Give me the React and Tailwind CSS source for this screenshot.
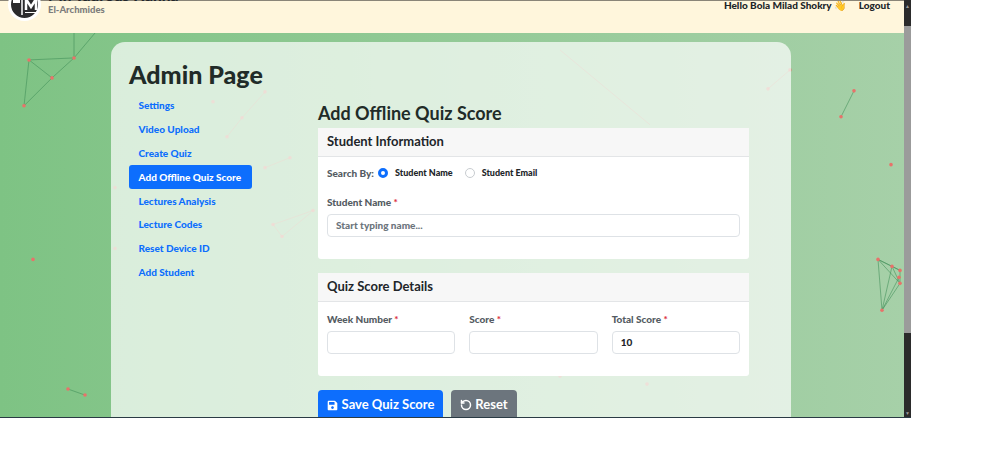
import { RotateCcw } from 'lucide-react';
import { FaSave } from 'react-icons/fa';

const navItems = [
  { name: 'Settings' },
  { name: 'Video Upload' },
  { name: 'Create Quiz' },
  { name: 'Add Offline Quiz Score', active: true },
  { name: 'Lectures Analysis' },
  { name: 'Lecture Codes' },
  { name: 'Reset Device ID' },
  { name: 'Add Student' },
];

// network backdrop, in page coordinates
const dots = [
  [29, 60], [74, 58], [52, 78], [24, 106], [854, 91], [841, 117], [891, 165],
  [878, 260], [892, 267], [900, 271], [899, 278], [900, 284], [882, 311],
  [68, 390], [85, 396], [33, 260],
];

const lines = [
  [29, 60, 74, 58], [29, 60, 52, 78], [29, 60, 24, 106], [24, 106, 52, 78], [52, 78, 74, 58],
  [74, 58, 95, 33], [74, 58, 74, 33], [854, 91, 841, 117], [68, 390, 85, 396],
  [878, 260, 892, 267], [892, 267, 900, 271], [878, 260, 900, 284], [878, 260, 882, 311],
  [882, 311, 900, 284], [882, 311, 899, 278], [892, 267, 900, 284], [900, 271, 900, 284],
  [882, 311, 892, 267], [878, 260, 900, 271],
];

const faintDots = [
  [213, 102], [265, 92], [242, 118], [227, 137], [290, 158], [265, 168], [273, 225], [282, 237],
  [313, 211], [115, 188], [115, 249], [790, 70], [768, 89], [647, 385], [560, 377],
];

const faint = [
  [265, 92, 242, 118], [242, 118, 227, 137], [290, 158, 265, 168], [273, 225, 313, 211],
  [282, 237, 311, 213], [273, 225, 282, 237], [790, 70, 768, 89], [560, 50, 650, 125],
];

const Backdrop = () => (
  <svg className="absolute inset-0 h-full w-full" viewBox="0 0 904 385" preserveAspectRatio="none">
    <g transform="translate(0 -33)">
      {lines.map(([x1, y1, x2, y2], i) => (
        <line key={i} x1={x1} y1={y1} x2={x2} y2={y2} stroke="#3f8f58" strokeWidth="0.7" opacity="0.8" />
      ))}
      {faint.map(([x1, y1, x2, y2], i) => (
        <line key={i} x1={x1} y1={y1} x2={x2} y2={y2} stroke="#e0695f" strokeWidth="0.7" opacity="0.5" />
      ))}
      {faintDots.map(([cx, cy], i) => (
        <circle key={i} cx={cx} cy={cy} r="1.8" fill="#e8726a" opacity="0.6" />
      ))}
      {dots.map(([cx, cy], i) => (
        <circle key={i} cx={cx} cy={cy} r="1.8" fill="#e8726a" />
      ))}
    </g>
  </svg>
);

const Label = ({ children }) => (
  <div className="text-[10px] leading-[14px] font-black text-[#545b62]">
    {children} <span className="text-[#dc3545]">*</span>
  </div>
);

const Field = ({ label, value }) => (
  <div className="flex flex-col gap-[5px]">
    <Label>{label}</Label>
    <div className="flex h-[23px] items-center rounded-[4px] border border-[#dee2e6] bg-white px-2 text-[10px] font-black text-[#212529]">
      {value}
    </div>
  </div>
);

const Card = ({ title, children }) => (
  <div className="rounded-[3px] bg-white">
    <div className="flex h-[29px] items-center border-b border-[#e3e5e7] bg-[#f7f7f7] px-[9px] text-[13px] font-bold text-[#212529]">
      {title}
    </div>
    {children}
  </div>
);

export default function App() {
  return (
    <div className="h-[461px] w-[1000px] overflow-hidden bg-white font-['Lato','Noto_Sans',sans-serif]">
      <div className="flex h-[418px] w-[911px] border-b border-[#2a3a44]">
        <div className="flex w-[904px] flex-col overflow-hidden">
          <header className="flex h-[33px] shrink-0 items-start justify-between border-t border-[#8a8578] bg-[#fff6dc] pr-[14px] pl-[9px]">
            <div className="-mt-[12px] flex items-start gap-[8px]">
              <div className="h-[31px] w-[31px] shrink-0 rounded-full border-[2px] border-white bg-[#2b2b2d] shadow-[0_0_0_1px_#fff]">
                <svg width="27" height="27" viewBox="0 0 27 27">
                  <path d="M2 10.5h7" fill="none" stroke="#fff" strokeWidth="3" />
                  <path d="M11 0v24" fill="none" stroke="#fff" strokeWidth="1.5" />
                  <path d="M15 19V8l5 8 5-8v11" fill="none" stroke="#fff" strokeWidth="2.5" />
                  <path d="M14 21.5h11" fill="none" stroke="#fff" strokeWidth="1" />
                </svg>
              </div>
              <div className="-mt-[1px] flex flex-col">
                <span className="text-[15.5px] leading-[15px] font-black whitespace-nowrap text-[#212529]">Mr. Tadrous Hanna</span>
                <span className="mt-[2px] text-[9.5px] leading-[10px] font-black text-[#7d7d7d]">El-Archmides</span>
              </div>
            </div>
            <div className="-mt-[1px] flex items-center gap-[13px] text-[10px] leading-[11px] font-black text-[#212529]">
              <span>Hello Bola Milad Shokry <span className="text-[10px]">👋</span></span>
              <span>Logout</span>
            </div>
          </header>

          <main className="relative flex-1 overflow-hidden bg-gradient-to-r from-[#7ec384] to-[#a6d0a8] px-[111px] pt-[9px]">
            <Backdrop />
            <div className="relative h-[400px] w-[680px] rounded-t-[14px] bg-white/70 pt-[16px] pr-[42px] pl-[18px]">
              <h1 className="text-[25px] leading-[32px] font-black text-[#212b28]">Admin Page</h1>
              <div className="mt-[4px] flex">
                <nav className="flex w-[189px] shrink-0 flex-col">
                  {navItems.map((nav) => (
                    <div
                      key={nav.name}
                      className={`flex h-[23.8px] w-[123px] items-center rounded-[3px] px-[9.5px] text-[10px] font-black whitespace-nowrap ${
                        nav.active ? 'bg-[#0d6efd] text-white' : 'text-[#0d6efd]'
                      }`}
                    >
                      {nav.name}
                    </div>
                  ))}
                </nav>
                <div className="flex-1">
                  <h2 className="mt-[8px] mb-[4px] text-[18px] leading-[22px] font-bold text-[#212b28]">Add Offline Quiz Score</h2>
                  <Card title="Student Information">
                    <div className="px-[9px] pt-[9px] pb-[22px]">
                      <div className="flex h-[14px] items-center text-[9px] font-black text-[#212529]">
                        <span className="mr-[4px] text-[10px] text-[#545b62]">Search By:</span>
                        <span className="mr-[7px] h-[10px] w-[10px] rounded-full border-[3px] border-[#0d6efd] bg-white" />
                        <span className="mr-[12px]">Student Name</span>
                        <span className="mr-[7px] h-[10px] w-[10px] rounded-full border border-[#c8ccd0] bg-white" />
                        <span>Student Email</span>
                      </div>
                      <div className="mt-[15px] flex flex-col gap-[5px]">
                        <Label>Student Name</Label>
                        <div className="flex h-[23px] items-center rounded-[4px] border border-[#dee2e6] bg-white px-2 text-[10px] font-black text-[#6c757d]">
                          Start typing name...
                        </div>
                      </div>
                    </div>
                  </Card>
                  <div className="mt-[14px]">
                    <Card title="Quiz Score Details">
                      <div className="grid grid-cols-3 gap-[14px] px-[9px] pt-[10px] pb-[22px]">
                        <Field label="Week Number" />
                        <Field label="Score" />
                        <Field label="Total Score" value="10" />
                      </div>
                    </Card>
                  </div>
                  <div className="mt-[14px] flex gap-[8px]">
                    <div className="flex h-[30px] w-[125px] items-center justify-center gap-[4px] rounded-[4px] bg-[#0d6efd] text-[13px] font-bold text-white">
                      <FaSave size={11} />
                      Save Quiz Score
                    </div>
                    <div className="flex h-[30px] w-[66px] items-center justify-center gap-[3px] rounded-[4px] bg-[#6c757d] text-[13px] font-bold text-white">
                      <RotateCcw size={12} strokeWidth={3} />
                      Reset
                    </div>
                  </div>
                </div>
              </div>
            </div>
          </main>
        </div>

        <div className="flex w-[7px] flex-col bg-[#2b2b2b]">
          <div className="h-[26px] pt-[3px] text-center text-[5px] leading-[6px] text-[#9a9a9a]">▲</div>
          <div className="h-[307px] bg-[#9b9b9b]" />
          <div className="flex-1" />
          <div className="text-center text-[5px] leading-[8px] text-[#9a9a9a]">▼</div>
        </div>
      </div>
    </div>
  );
}
